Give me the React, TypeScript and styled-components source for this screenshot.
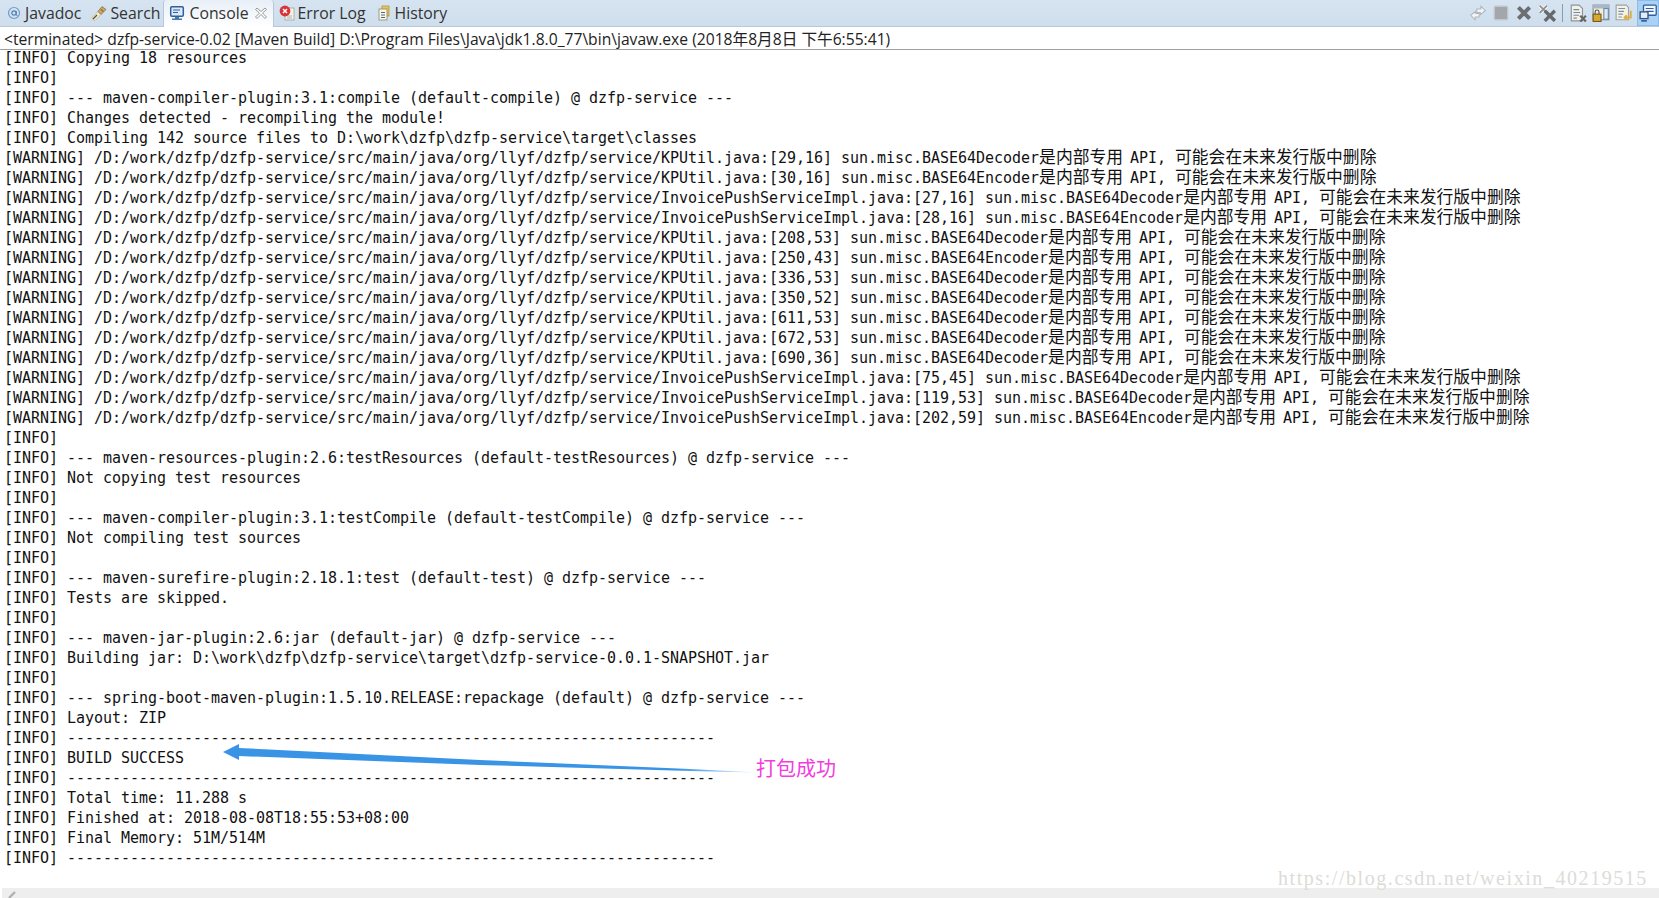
import React from "react";
import styled, { createGlobalStyle } from "styled-components";

const GlobalStyle = createGlobalStyle`
  html, body {
    margin: 0;
    padding: 0;
    background: #fff;
    overflow: hidden;
  }
`;

const Page = styled.div`
  position: relative;
  width: 1659px;
  height: 898px;
  display: flex;
  flex-direction: column;
  overflow: hidden;
  background: #fff;
`;

const TabBar = styled.div`
  height: 26px;
  flex: none;
  display: flex;
  align-items: stretch;
  justify-content: space-between;
  background: linear-gradient(#d6e4f2, #cfdeec);
  border-bottom: 1px solid #b9c7da;
  font-family: "Open Sans", "Noto Sans", sans-serif;
  font-size: 15.8px;
  color: #333;
`;

const Tabs = styled.div`
  display: flex;
  align-items: stretch;
  padding-left: 2px;
`;

const Tab = styled.div<{ $active?: boolean; $after?: number }>`
  box-sizing: border-box;
  display: flex;
  align-items: center;
  gap: ${(p) => (p.$active ? "4px" : "3px")};
  height: ${(p) => (p.$active ? "27px" : "26px")};
  padding: ${(p) => (p.$active ? "0 4px 1px 5px" : "0 4px")};
  margin-right: ${(p) => p.$after ?? 0}px;
  background: ${(p) => (p.$active ? "linear-gradient(#e8eff7, #ffffff)" : "transparent")};
  border-left: ${(p) => (p.$active ? "1px solid #b9c7da" : "none")};
  border-right: ${(p) => (p.$active ? "1px solid #b9c7da" : "none")};
  border-radius: ${(p) => (p.$active ? "3px 3px 0 0" : "0")};
`;

const TabIcon = styled.svg`
  width: 16px;
  height: 16px;
  flex: none;
`;

const Tools = styled.div`
  display: flex;
  align-items: center;
  gap: 5px;
`;

const ToolIcon = styled.svg`
  width: 18px;
  height: 18px;
  flex: none;
`;

const ToolSep = styled.div`
  width: 1px;
  height: 18px;
  margin: 0 1px;
  background: #8d9aa8;
`;

const ToolBtn = styled.div`
  width: 22px;
  height: 26px;
  margin-left: -1px;
  display: flex;
  align-items: center;
  justify-content: center;
  background: #a9d1f5;
  box-shadow: inset 0 0 0 1px #8fbce6;
`;

const StatusLine = styled.div`
  height: 22px;
  flex: none;
  padding-left: 4px;
  border-bottom: 1px solid #a0a0a0;
  font-family: "Open Sans", "Noto Sans", "Noto Sans CJK SC", sans-serif;
  font-size: 15.65px;
  line-height: 24px;
  color: #222;
  white-space: pre;
  overflow: hidden;
`;

const Output = styled.div`
  flex: 1;
  padding-left: 4px;
  margin-top: -2px;
  font-family: "DejaVu Sans Mono", "Noto Sans CJK SC", monospace;
  font-size: 15px;
  letter-spacing: -0.03px;
  line-height: 20px;
  color: #111;
  white-space: pre;
`;

const Line = styled.div`
  height: 20px;
`;

const Cjk = styled.span<{ $tight?: boolean }>`
  font-family: "Noto Sans CJK SC", sans-serif;
  font-size: 16.8px;
  letter-spacing: 0;
  line-height: 0;
  margin-right: ${(p) => (p.$tight ? "-2px" : "0")};
`;

const ScrollBar = styled.div`
  height: 10px;
  flex: none;
  margin-left: 2px;
  background: #eeeeee;
`;

const ScrollMark = styled.svg`
  display: block;
  margin-left: 6px;
  width: 9px;
  height: 10px;
`;

const ArrowLayer = styled.svg`
  position: absolute;
  left: 215px;
  top: 735px;
  width: 550px;
  height: 50px;
`;

const Note = styled.div`
  position: absolute;
  left: 756px;
  top: 755px;
  font-family: "Noto Sans CJK SC", sans-serif;
  font-size: 20px;
  line-height: 26px;
  color: #f23ce0;
`;

const Watermark = styled.div`
  position: absolute;
  left: 1278px;
  top: 866px;
  font-family: "Liberation Serif", serif;
  font-size: 20px;
  letter-spacing: 1.56px;
  line-height: 24px;
  color: #dcdcd8;
`;

const warnMsg = (kind: string) => (
  <>
    {` sun.misc.BASE64${kind}`}
    <Cjk $tight>是内部专用</Cjk>
    {" API, "}
    <Cjk>可能会在未来发行版中删除</Cjk>
  </>
);

const base = "/D:/work/dzfp/dzfp-service/src/main/java/org/llyf/dzfp/service/";
const dashes = "------------------------------------------------------------------------";

const warnings: [string, string][] = [
  ["KPUtil.java:[29,16]", "Decoder"],
  ["KPUtil.java:[30,16]", "Encoder"],
  ["InvoicePushServiceImpl.java:[27,16]", "Decoder"],
  ["InvoicePushServiceImpl.java:[28,16]", "Encoder"],
  ["KPUtil.java:[208,53]", "Decoder"],
  ["KPUtil.java:[250,43]", "Encoder"],
  ["KPUtil.java:[336,53]", "Decoder"],
  ["KPUtil.java:[350,52]", "Decoder"],
  ["KPUtil.java:[611,53]", "Decoder"],
  ["KPUtil.java:[672,53]", "Decoder"],
  ["KPUtil.java:[690,36]", "Decoder"],
  ["InvoicePushServiceImpl.java:[75,45]", "Decoder"],
  ["InvoicePushServiceImpl.java:[119,53]", "Decoder"],
  ["InvoicePushServiceImpl.java:[202,59]", "Encoder"],
];

const before = [
  "Copying 18 resources",
  "",
  "--- maven-compiler-plugin:3.1:compile (default-compile) @ dzfp-service ---",
  "Changes detected - recompiling the module!",
  "Compiling 142 source files to D:\\work\\dzfp\\dzfp-service\\target\\classes",
];

const after = [
  "",
  "--- maven-resources-plugin:2.6:testResources (default-testResources) @ dzfp-service ---",
  "Not copying test resources",
  "",
  "--- maven-compiler-plugin:3.1:testCompile (default-testCompile) @ dzfp-service ---",
  "Not compiling test sources",
  "",
  "--- maven-surefire-plugin:2.18.1:test (default-test) @ dzfp-service ---",
  "Tests are skipped.",
  "",
  "--- maven-jar-plugin:2.6:jar (default-jar) @ dzfp-service ---",
  "Building jar: D:\\work\\dzfp\\dzfp-service\\target\\dzfp-service-0.0.1-SNAPSHOT.jar",
  "",
  "--- spring-boot-maven-plugin:1.5.10.RELEASE:repackage (default) @ dzfp-service ---",
  "Layout: ZIP",
  dashes,
  "BUILD SUCCESS",
  dashes,
  "Total time: 11.288 s",
  "Finished at: 2018-08-08T18:55:53+08:00",
  "Final Memory: 51M/514M",
  dashes,
];

const App: React.FC = () => {
  return (
    <Page>
      <GlobalStyle />
      <TabBar>
        <Tabs>
          <Tab $after={2}>
            <TabIcon viewBox="0 0 16 16">
              <circle cx="8" cy="8" r="5.5" fill="none" stroke="#6f9bc8" strokeWidth="1.2" />
              <circle cx="8" cy="8" r="2.2" fill="none" stroke="#4f7fb4" strokeWidth="1.2" />
              <path d="M10.2 6v3.5q0 1.2 1.3 1" fill="none" stroke="#4f7fb4" strokeWidth="1" />
            </TabIcon>
            Javadoc
          </Tab>
          <Tab $after={-1}>
            <TabIcon viewBox="0 0 16 16">
              <path d="M1 12.5 L7 6.5 L10 9.5 L4 15.5 Q1.5 15.5 1 12.5 Z" fill="#f4ead0" stroke="#b7a98a" strokeWidth="0.6" />
              <path d="M7 6.5 L11 1.5 L15 4.5 L10 9.5 Z" fill="#c9a868" stroke="#7d6638" strokeWidth="0.7" />
              <path d="M10 4.5 L12.5 6.5" stroke="#8a6f3a" strokeWidth="1.1" />
              <path d="M2 14 L6 10" stroke="#5a5040" strokeWidth="1.2" />
            </TabIcon>
            Search
          </Tab>
          <Tab $active $after={1}>
            <TabIcon viewBox="0 0 16 16">
              <rect x="1.7" y="1.7" width="12.6" height="9.6" rx="1.2" fill="#dfe9f5" stroke="#2f5f9e" strokeWidth="1.5" />
              <path d="M4 5h7M4 7.5h5" stroke="#2f5f9e" />
              <path d="M6 12h4v1.5H6zM3 13.5h10V15H3z" fill="#4a76ad" />
            </TabIcon>
            Console
            <TabIcon viewBox="0 0 16 16">
              <path d="M4 3 L8 6.5 L12 3 L13.5 4.5 L9.5 8 L13.5 12 L12 13.5 L8 9.5 L4 13.5 L2.5 12 L6.5 8 L2.5 4.5 Z" fill="#fff" stroke="#8b8b8b" strokeWidth="0.9" />
            </TabIcon>
          </Tab>
          <Tab $after={2}>
            <TabIcon viewBox="0 0 16 16">
              <rect x="6" y="3" width="9" height="12" fill="#f7f2dc" stroke="#9aa5b0" strokeWidth="0.8" />
              <path d="M8 11h5M8 13h5" stroke="#a8b4c0" />
              <circle cx="6" cy="6" r="5.4" fill="#d8343a" />
              <path d="M4 4 L8 8 M8 4 L4 8" stroke="#fff" strokeWidth="1.5" />
            </TabIcon>
            Error Log
          </Tab>
          <Tab>
            <TabIcon viewBox="0 0 16 16">
              <rect x="6" y="1" width="7" height="10" fill="#e9c65a" stroke="#a88a30" strokeWidth="0.7" />
              <rect x="3" y="4" width="8" height="11" fill="#fbf7e3" stroke="#8a8a6a" strokeWidth="0.8" />
              <path d="M5 7.5h4M5 10h4M5 12.5h4" stroke="#4a6a90" />
            </TabIcon>
            History
          </Tab>
        </Tabs>
        <Tools>
          <ToolIcon viewBox="0 0 16 16">
            <path d="M1.5 10 L6 6.5 L6 8.5 L9 8.5 L9 11.5 L5.5 11.5 L5.5 14 Z" fill="#f2f5f8" stroke="#b0b6bc" strokeWidth="0.9" />
            <path d="M14.5 6 L10 9.5 L10 7.5 L7 7.5 L7 4.5 L10.5 4.5 L10.5 2 Z" fill="#f2f5f8" stroke="#b0b6bc" strokeWidth="0.9" />
          </ToolIcon>
          <ToolIcon viewBox="0 0 16 16">
            <rect x="2" y="2" width="12" height="12" rx="1.2" fill="#a3a7ab" stroke="#c4c8cc" strokeWidth="1.2" />
          </ToolIcon>
          <ToolIcon viewBox="0 0 16 16">
            <path d="M3 3 L13 13 M13 3 L3 13" stroke="#6c6f72" strokeWidth="3.6" />
          </ToolIcon>
          <ToolIcon viewBox="0 0 16 16">
            <path d="M1.5 1.5 L8 8 M8 1.5 L1.5 8" stroke="#fff" strokeWidth="3" />
            <path d="M1.5 1.5 L8 8 M8 1.5 L1.5 8" stroke="#8d9094" strokeWidth="1.6" />
            <path d="M6 6 L15 15 M15 6 L6 15" stroke="#66696c" strokeWidth="3" />
          </ToolIcon>
          <ToolSep />
          <ToolIcon viewBox="0 0 16 16">
            <path d="M2 1h7l3 3v11H2z" fill="#f4f1e2" stroke="#8a93a0" />
            <path d="M4 5h5M4 7.5h6M4 10h5M4 12.5h3" stroke="#6f8cae" />
            <path d="M10 10.5 L15 15.5 M15 10.5 L10 15.5" stroke="#666" strokeWidth="2" />
          </ToolIcon>
          <ToolIcon viewBox="0 0 16 16">
            <rect x="1" y="1" width="14" height="13" fill="#f3eeda" stroke="#7f8c9c" />
            <rect x="1" y="1" width="14" height="3" fill="#a9b8c8" />
            <rect x="10.5" y="4" width="4" height="9.5" fill="#dde8f2" stroke="#6f8cae" />
            <rect x="1" y="9" width="7" height="6.5" fill="#d8a930" stroke="#7a5a10" />
            <path d="M2.8 9 V7 a1.7 1.7 0 0 1 3.4 0 V9" fill="none" stroke="#555" />
          </ToolIcon>
          <ToolIcon viewBox="0 0 16 16">
            <path d="M1 1h9l2 2v11H1z" fill="#f6f2e2" stroke="#9aa2ac" />
            <path d="M3 4h6M3 6.5h5M3 9h4M3 11.5h3" stroke="#7a92ae" />
            <path d="M14 6 V12 H8.5 M10.5 10 L8.5 12 L10.5 14" fill="none" stroke="#dcb040" strokeWidth="1.7" />
          </ToolIcon>
          <ToolBtn>
            <ToolIcon viewBox="0 0 16 16">
              <rect x="4" y="1" width="11.3" height="9" rx="0.8" fill="#f3f7fb" stroke="#2f5f9e" strokeWidth="1.2" />
              <path d="M6 4h7M6 6.5h7" stroke="#2f5f9e" />
              <rect x="1" y="7" width="7" height="6" fill="#e4edf6" stroke="#2f5688" strokeWidth="1.2" />
              <path d="M2 15h5" stroke="#2f5688" strokeWidth="1.4" />
            </ToolIcon>
          </ToolBtn>
        </Tools>
      </TabBar>
      <StatusLine>{"<terminated> dzfp-service-0.02 [Maven Build] D:\\Program Files\\Java\\jdk1.8.0_77\\bin\\javaw.exe (2018年8月8日 下午6:55:41)"}</StatusLine>
      <Output>
        {before.map((t, i) => (
          <Line key={`b${i}`}>{`[INFO] ${t}`}</Line>
        ))}
        {warnings.map(([file, kind]) => (
          <Line key={file}>
            {`[WARNING] ${base}${file}`}
            {warnMsg(kind)}
          </Line>
        ))}
        {after.map((t, i) => (
          <Line key={`a${i}`}>{`[INFO] ${t}`}</Line>
        ))}
      </Output>
      <ScrollBar>
        <ScrollMark viewBox="0 0 9 10">
          <path d="M1 10 L7 4" stroke="#b0b0b0" strokeWidth="2.4" />
        </ScrollMark>
      </ScrollBar>
      <ArrowLayer viewBox="215 735 550 50">
        <defs>
          <linearGradient id="fade" x1="0" x2="1" y1="0" y2="0">
            <stop offset="0" stopColor="#3a94e6" />
            <stop offset="0.85" stopColor="#3a94e6" />
            <stop offset="1" stopColor="#dcecfa" />
          </linearGradient>
        </defs>
        <path d="M223 752 L239 744 L239 748 L480 760 L690 769 L757 772.5 L690 771 L480 765 L239 756 L239 760 Z" fill="url(#fade)" />
      </ArrowLayer>
      <Note>打包成功</Note>
      <Watermark>https://blog.csdn.net/weixin_40219515</Watermark>
    </Page>
  );
};

export default App;
